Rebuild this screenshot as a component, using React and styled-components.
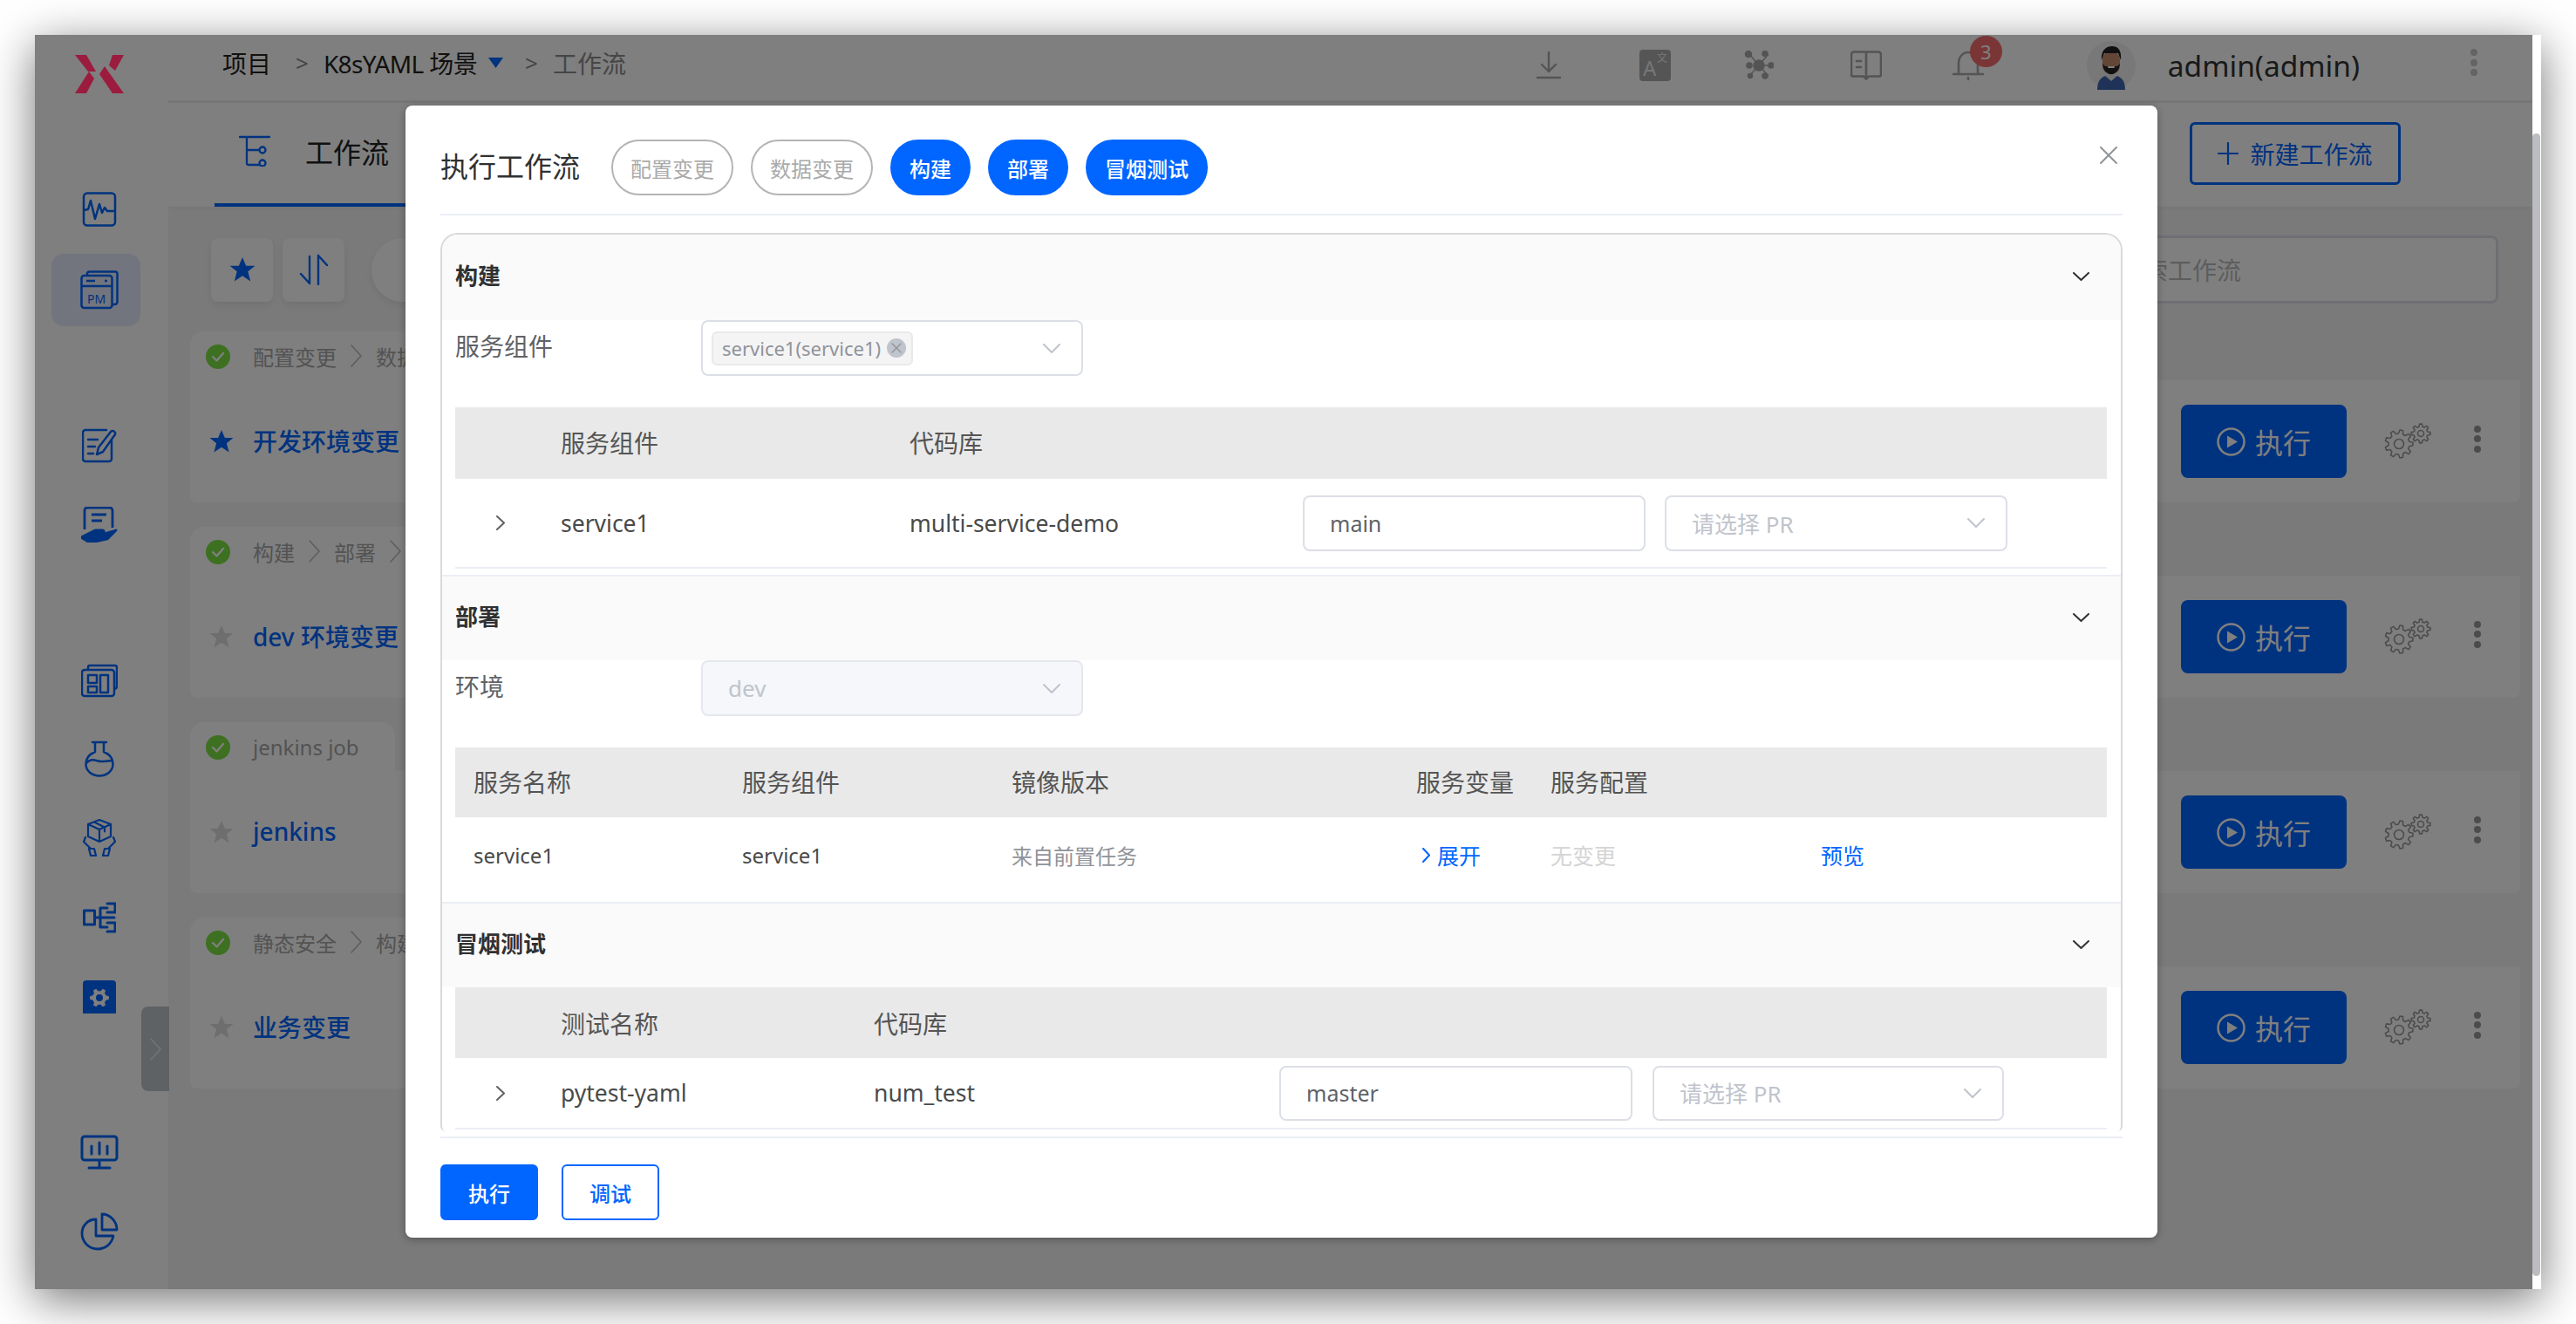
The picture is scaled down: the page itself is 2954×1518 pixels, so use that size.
import React from 'react';
import styled, { createGlobalStyle } from 'styled-components';

const BLUE = '#0066ff';
const FONT = '"Noto Sans", "Noto Sans CJK SC", sans-serif';

const GlobalStyle = createGlobalStyle`
  html, body { margin: 0; padding: 0; background: #fff; }
  body { font-family: ${FONT}; width: 2954px; height: 1518px; overflow: hidden; }
  * { box-sizing: border-box; }
`;

const Desktop = styled.div`
  width: 2954px;
  height: 1518px;
  padding: 40px;
`;

const Browser = styled.div`
  position: relative;
  display: flex;
  width: 2874px;
  height: 1438px;
  overflow: hidden;
  background: #f5f5f5;
  box-shadow: 0 12px 50px rgba(0, 0, 0, 0.55);
`;

const ScrollTrack = styled.div`
  width: 10px;
  flex: none;
  padding-top: 113px;
  background: #fff;
`;

const ScrollThumb = styled.div`
  width: 9px;
  height: 1310px;
  border-radius: 5px;
  background: #bcbdc0;
`;

/* sidebar */
const Sidebar = styled.aside`
  width: 153px;
  flex: none;
  display: flex;
  flex-direction: column;
  align-items: center;
  padding-right: 5px;
  background: #fff;
  position: relative;
`;

const LogoWrap = styled.div`
  display: flex;
  margin-top: 23px;
  position: relative;
  z-index: 3;
`;

const NavSlot = styled.div`
  display: flex;
  align-items: center;
  justify-content: center;
  width: 102px;
  height: ${(p) => p.$h}px;
  margin-top: ${(p) => p.$mt || 0}px;
  margin-left: ${(p) => (p.$active ? -8 : 0)}px;
  padding-left: ${(p) => (p.$active ? 8 : 0)}px;
  border-radius: 14px;
  background: ${(p) => (p.$active ? '#e4ebfa' : 'transparent')};
`;

const CollapseHandle = styled.div`
  position: absolute;
  left: 122px;
  top: 1114px;
  width: 32px;
  height: 97px;
  z-index: 1;
  display: flex;
  align-items: center;
  justify-content: center;
  border-radius: 8px 0 0 8px;
  background: #bfc4ca;
`;

/* top bar */
const Main = styled.main`
  flex: 1;
  min-width: 0;
  display: flex;
  flex-direction: column;
`;

const TopBar = styled.header`
  height: 78px;
  flex: none;
  display: flex;
  align-items: center;
  padding: 0 0 6px 62px;
  background: #fff;
  border-bottom: 3px solid #ececec;
  font-size: 28px;
`;

const Crumbs = styled.nav`
  display: flex;
  align-items: center;
  padding-bottom: 6px;
`;

const Crumb = styled.span`
  color: ${(p) => (p.$muted ? '#8c8c8c' : '#222')};
  letter-spacing: ${(p) => p.$ls || 0}px;
`;

const CrumbSep = styled.span`
  margin: 0 17px 0 ${(p) => p.$ml || 28}px;
  color: #888;
  font-size: 26px;
`;

const CrumbCaret = styled.svg`
  margin-left: 13px;
`;

const ToolIcons = styled.div`
  margin-left: auto;
  padding-right: 63px;
  display: flex;
  align-items: center;
`;

const ToolSlot = styled.div`
  position: relative;
  display: flex;
  align-items: center;
  margin-left: ${(p) => p.$ml}px;
`;

const Badge = styled.span`
  position: absolute;
  left: 20px;
  top: -16px;
  width: 37px;
  height: 36px;
  display: flex;
  align-items: center;
  justify-content: center;
  border-radius: 50%;
  background: #f56c6c;
  color: #fff;
  font-size: 22px;
`;

const UserName = styled.span`
  margin-left: 37px;
  font-size: 33.500px;
  color: #333;
  white-space: nowrap;
`;

const TabBar = styled.div`
  height: 119px;
  flex: none;
  display: flex;
  align-items: stretch;
  padding: 0 151px 0 53px;
  background: #fff;
  box-shadow: 0 2px 4px rgba(0, 0, 0, 0.04);
`;

const Tab = styled.div`
  display: flex;
  align-items: center;
  gap: 40px;
  width: 300px;
  padding: 0 0 6px 28px;
  border-bottom: 4px solid ${BLUE};
  font-size: 32px;
  color: #222;
`;

const NewButton = styled.button`
  margin: 22px 0 25px auto;
  width: 242px;
  display: flex;
  align-items: center;
  justify-content: center;
  gap: 13px;
  font: 28px ${FONT};
  color: ${BLUE};
  background: #fff;
  border: 3px solid ${BLUE};
  border-radius: 6px;
`;

const Toolbar = styled.div`
  display: flex;
  align-items: center;
  height: 78px;
  margin-top: 33px;
  padding: 0 39px 0 49px;
`;

const SquareButton = styled.div`
  width: 71px;
  height: 73px;
  margin-right: 11px;
  display: flex;
  align-items: center;
  justify-content: center;
  background: #fff;
  border-radius: 8px;
  box-shadow: 0 4px 10px rgba(0, 0, 0, 0.08);
`;

const PillFilter = styled.div`
  width: 320px;
  height: 73px;
  margin-left: 20px;
  border-radius: 36px;
  background: #fff;
  box-shadow: 0 4px 10px rgba(0, 0, 0, 0.08);
`;

const SearchBox = styled.div`
  margin-left: auto;
  width: 470px;
  height: 78px;
  padding-left: 32px;
  display: flex;
  align-items: center;
  font-size: 28px;
  color: #bbb;
  background: #fff;
  border: 3px solid #dcdfe6;
  border-radius: 8px;
`;

/* workflow cards */
const CardList = styled.div`
  display: flex;
  flex-direction: column;
  gap: 28px;
  margin: 32px 14px 0 25px;
`;

const CardTab = styled.div`
  display: inline-flex;
  align-items: center;
  height: 56px;
  padding: 0 41px 0 18px;
  border-radius: 16px 16px 0 0;
  background: #fff;
  font-size: 24px;
  color: #a6a6a6;
  vertical-align: top;
`;

const CheckDot = styled.span`
  width: 28px;
  height: 28px;
  margin: 2px 26px 0 0;
  flex: none;
  display: flex;
  align-items: center;
  justify-content: center;
  border-radius: 50%;
  background: #7ce043;
`;

const StageSep = styled.span`
  display: flex;
  margin: 0 16px;
`;

const CardBody = styled.div`
  height: 140px;
  display: flex;
  align-items: center;
  padding: 0 45px 0 22px;
  background: #fff;
  border-radius: 0 0 8px 8px;
`;

const CardName = styled.span`
  margin-left: 22px;
  padding-bottom: 3px;
  font-size: 28px;
  font-weight: 500;
  color: ${BLUE};
`;

const RunButton = styled.div`
  margin-left: auto;
  width: 190px;
  height: 84px;
  display: flex;
  align-items: center;
  justify-content: center;
  gap: 11px;
  border-radius: 8px;
  background: ${BLUE};
  color: #fff;
  font-size: 32px;
`;

const GearWrap = styled.div`
  display: flex;
  margin: 0 49px 0 43px;
`;

const Dots = styled.div`
  display: flex;
  flex-direction: column;
  gap: 3.500px;
  margin-top: -6px;
  span {
    width: 8px;
    height: 8px;
    border-radius: 50%;
    background: ${(p) => p.$c || '#999'};
  }
`;

/* modal */
const Overlay = styled.div`
  position: absolute;
  left: 0;
  top: 0;
  right: 10px;
  bottom: 0;
  z-index: 2;
  padding: 81px 0 0 425px;
  background: rgba(0, 0, 0, 0.5);
`;

const Modal = styled.div`
  width: 2009px;
  height: 1298px;
  padding: 0 40px;
  display: flex;
  flex-direction: column;
  background: #fff;
  border-radius: 8px;
  box-shadow: 0 2px 10px rgba(0, 0, 0, 0.3);
`;

const ModalHead = styled.div`
  position: relative;
  flex: none;
  height: 126px;
  display: flex;
  align-items: center;
  padding-top: 18px;
  border-bottom: 2px solid #ebeef5;
`;

const ModalTitle = styled.h2`
  margin: 0 36px 0 0;
  padding-bottom: 6px;
  font-size: 32px;
  font-weight: 400;
  color: #303133;
`;

const Pill = styled.span`
  height: 64px;
  margin-right: 20px;
  padding: 0 20px;
  display: flex;
  align-items: center;
  border-radius: 32px;
  font-size: 24px;
  border: 2px solid ${(p) => (p.$on ? BLUE : '#b4b4b4')};
  background: ${(p) => (p.$on ? BLUE : '#fff')};
  color: ${(p) => (p.$on ? '#fff' : '#aaa')};
  font-weight: ${(p) => (p.$on ? 500 : 400)};
`;

const CloseButton = styled.div`
  position: absolute;
  right: 6px;
  top: 47px;
  display: flex;
`;

const Panel = styled.div`
  flex: none;
  height: 1030px;
  margin-top: 20px;
  overflow: hidden;
  border: 2px solid #d9d9d9;
  border-bottom: 0;
  border-radius: 20px 20px 6px 6px;
`;

const Section = styled.section`
  border-top: ${(p) => (p.$first ? '0' : '2px solid #ebeef5')};
`;

const SectionHead = styled.div`
  height: ${(p) => (p.$first ? 98 : 96)}px;
  display: flex;
  align-items: center;
  justify-content: space-between;
  padding: 0 36px 2px 15px;
  background: #fafafa;
`;

const SectionTitle = styled.span`
  padding-bottom: 5px;
  font-size: 26px;
  font-weight: 700;
  color: #303133;
`;

const SectionBody = styled.div`
  padding: 0 16px 0 15px;
`;

const FieldRow = styled.div`
  display: flex;
  align-items: flex-start;
  height: 64px;
  margin-bottom: 36px;
`;

const FieldLabel = styled.label`
  width: 282px;
  flex: none;
  line-height: 60px;
  font-size: 28px;
  color: #606266;
`;

const SelectBox = styled.div`
  width: ${(p) => p.$w}px;
  height: ${(p) => p.$h || 64}px;
  flex: none;
  display: flex;
  align-items: center;
  justify-content: space-between;
  padding: 0 24px 0 ${(p) => p.$pl || 29}px;
  font-size: 26px;
  color: #c0c4cc;
  background: ${(p) => (p.$disabled ? '#f5f7fa' : '#fff')};
  border: 2px solid ${(p) => (p.$disabled ? '#e4e7ed' : '#dcdfe6')};
  border-radius: 8px;
`;

const TextInput = styled(SelectBox)`
  color: #606266;
  font-size: 25px;
`;

const Tag = styled.span`
  display: flex;
  align-items: center;
  gap: 7px;
  height: 39px;
  padding: 0 6px 0 10px;
  border-radius: 6px;
  font-size: 22px;
  color: #909399;
  background: #f4f4f5;
  border: 2px solid #e9e9eb;
`;

const TagClose = styled.span`
  width: 22px;
  height: 22px;
  display: flex;
  align-items: center;
  justify-content: center;
  border-radius: 50%;
  background: #c0c4cc;
`;

const TableHead = styled.div`
  display: grid;
  grid-template-columns: ${(p) => p.$cols};
  align-items: center;
  height: ${(p) => p.$h}px;
  padding-left: ${(p) => p.$pl || 0}px;
  padding-bottom: ${(p) => p.$pb || 0}px;
  background: #e9e9e9;
  font-size: 28px;
  color: #555;
`;

const TableRow = styled.div`
  display: grid;
  grid-template-columns: ${(p) => p.$cols};
  align-items: center;
  height: ${(p) => p.$h}px;
  padding-left: ${(p) => p.$pl || 0}px;
  padding-bottom: ${(p) => p.$pb || 0}px;
  font-size: ${(p) => p.$fs || 26.5}px;
  color: #4a4a4a;
  border-bottom: ${(p) => (p.$line ? '2px solid #ebeef5' : '0')};
  margin-bottom: ${(p) => p.$mb || 0}px;
`;

const ExpandCell = styled.span`
  display: flex;
  padding-left: 47px;
`;

const Muted = styled.span`
  color: ${(p) => p.$c};
  font-size: ${(p) => p.$fs || 24}px;
`;

const LinkCell = styled.span`
  display: flex;
  align-items: center;
  gap: 8px;
  margin-left: ${(p) => p.$ml || 0}px;
  color: ${BLUE};
  font-size: 25px;
`;

const Footer = styled.div`
  flex: none;
  margin-top: 6px;
  padding-top: 30px;
  display: flex;
  gap: 27px;
  border-top: 2px solid #ebeef5;
`;

const FootButton = styled.button`
  width: 112px;
  height: 64px;
  font: 500 24px ${FONT};
  border-radius: 6px;
  border: 2px solid ${BLUE};
  background: ${(p) => (p.$solid ? BLUE : '#fff')};
  color: ${(p) => (p.$solid ? '#fff' : BLUE)};
`;

/* icons */
const Line = ({ w, h, d, color = BLUE, sw = 2.5, vb }) => (
  <svg width={w} height={h} viewBox={vb || `0 0 ${w} ${h}`} fill="none" stroke={color} strokeWidth={sw} strokeLinecap="round" strokeLinejoin="round">
    <path d={d} />
  </svg>
);

const ChevronDown = ({ w = 19, h = 10, color = '#303133', sw = 2 }) => (
  <Line w={w} h={h} sw={sw} color={color} d={`M1 1L${w / 2} ${h - 1}L${w - 1} 1`} />
);

const ChevronRight = ({ w = 10, h = 17, color = '#606266', sw = 2 }) => (
  <Line w={w} h={h} sw={sw} color={color} d={`M1 1L${w - 1} ${h / 2}L1 ${h - 1}`} />
);

const StarIcon = ({ size = 28, color = BLUE }) => (
  <svg width={size} height={size} viewBox="0 0 28 28" fill={color}>
    <path d="M14 1l3.900 9h9.600l-7.600 6.200 2.700 10.300L14 20.800l-8.600 5.700 2.700-10.300L.5 10h9.600z" />
  </svg>
);

const gearPath = (cx, cy, ro, ri, teeth) => {
  const pts = [];
  const step = (Math.PI * 2) / teeth;
  for (let i = 0; i < teeth; i++) {
    const a = i * step;
    [[-0.32, ri], [-0.16, ro], [0.16, ro], [0.32, ri]].forEach(([k, r]) => {
      pts.push(`${(cx + Math.cos(a + k * step) * r).toFixed(2)} ${(cy + Math.sin(a + k * step) * r).toFixed(2)}`);
    });
  }
  return `M${pts.join('L')}Z`;
};

const GearsIcon = () => (
  <svg width="54" height="42" viewBox="0 0 54 42" fill="none" stroke="#999" strokeWidth="1.600" strokeLinejoin="round">
    <path d={gearPath(17, 24, 16, 12, 9)} />
    <circle cx="17" cy="24" r="5.500" />
    <path d={gearPath(42, 12, 11, 8, 8)} />
    <circle cx="42" cy="12" r="3.500" />
  </svg>
);

const PlayCircle = () => (
  <svg width="33" height="33" viewBox="0 0 33 33" fill="none">
    <circle cx="16.500" cy="16.500" r="15" stroke="#fff" strokeWidth="2.500" />
    <path d="M12 9.500l12 7-12 7z" fill="#fff" />
  </svg>
);

const CheckIcon = () => <Line w={16} h={14} sw={2.4} color="#fff" d="M2 7l4.500 4.500L14 3" />;

const XMark = ({ size = 20, color = '#909399', sw = 2 }) => (
  <Line w={size} h={size} sw={sw} color={color} d={`M1 1L${size - 1} ${size - 1}M${size - 1} 1L1 ${size - 1}`} />
);

const LogoX = () => (
  <svg width="56" height="44" viewBox="0 0 56 44" fill="#9b1c3e">
    <path d="M0 0h13l11 19h-9zM43 0h13L46 18l-7-6zM0 44l16-25 6 8-9 17zM28 22l6-9 22 31H43z" />
  </svg>
);

const ActivityIcon = () => (
  <Line w={40} h={40} d="M6 1.500h28a4 4 0 0 1 4 4v29a4 4 0 0 1-4 4H6a4 4 0 0 1-4-4v-29a4 4 0 0 1 4-4zM2 21l5-1 3-10 5 21 5-17 3 10 3-6 3 4h9" />
);

const PmIcon = () => (
  <svg width="44" height="45" viewBox="0 0 44 45" fill="none" stroke={BLUE} strokeWidth="2.500" strokeLinejoin="round">
    <path d="M8 6V4a2.500 2.500 0 0 1 2.500-2.500H40A2.500 2.500 0 0 1 42.500 4v32a3 3 0 0 1-3 3H37" />
    <rect x="1.500" y="6" width="35" height="37" rx="3" />
    <path d="M1.500 18h35M7 12h10M28 12h3" />
    <text x="8" y="38" fontSize="14" fill={BLUE} stroke="none" fontFamily={FONT}>PM</text>
  </svg>
);

const NoteIcon = () => (
  <Line w={40} h={40} d="M34 13v22a3 3 0 0 1-3 3H4a3 3 0 0 1-3-3V5a3 3 0 0 1 3-3h24M7 13h11M7 21h8M7 29h6M17 30l2-8L33 4a3 3 0 0 1 5 3L24 27z" />
);

const HandIcon = () => (
  <svg width="42" height="41" viewBox="0 0 42 41" fill="none" stroke={BLUE} strokeWidth="2.800" strokeLinejoin="round">
    <path d="M4 26V4a3 3 0 0 1 3-3h26a3 3 0 0 1 3 3v20M12 9h17M12 16h12" />
    <path d="M0 35l16-8h8c3 0 3 4 0 4h-6l8 0 14-4-10 10-14 3H8z" fill={BLUE} />
  </svg>
);

const BoardIcon = () => (
  <Line w={42} h={40} d="M4 8h31a3 3 0 0 1 3 3v24a3 3 0 0 1-3 3H4a3 3 0 0 1-3-3V11a3 3 0 0 1 3-3zM8 8V5a2 2 0 0 1 2-2h29a2 2 0 0 1 2 2v22a3 3 0 0 1-3 3M8 14h10v9H8zM8 27h10v7H8zM22 14h9v20h-9z" />
);

const FlaskIcon = () => (
  <Line w={34} h={42} d="M9 2h16M12 2v11C5 16 1.500 21 1.500 27c0 8 7 13.500 15.500 13.500S32.500 35 32.500 27c0-6-3.500-11-10.500-14V2M2 26c6-7 12-2 17-2s9-1 13-1" />
);

const BoxHandsIcon = () => (
  <Line w={38} h={46} sw={2.2} d="M19 2l13 5v14l-13 6-13-6V7zM6 7l13 6 13-6M19 13v14M13 4.500l12 6v5M3 22l-2 5 8 8M35 22l2 5-8 8M7 35h6l2 8H9zM31 35h-6l-2 8h6z" />
);

const FlowIcon = () => (
  <Line w={38} h={38} sw={3} d="M1.500 11h12v16h-12zM14 19h6M20 8v22M20 8h8M20 30h8M20 19h16M28 3h9v10h-9M28 25h9v10h-9" />
);

const GearBoxIcon = () => (
  <svg width="38" height="38" viewBox="0 0 38 38">
    <path d="M4 0h30a4 4 0 0 1 4 4v34H0V4a4 4 0 0 1 4-4z" fill={BLUE} />
    <path d={gearPath(19, 20, 11, 8, 6)} fill="#fff" />
    <circle cx="19" cy="20" r="4" fill={BLUE} />
  </svg>
);

const MonitorIcon = () => (
  <Line w={44} h={40} sw={3} d="M5 2h34a3 3 0 0 1 3 3v21a3 3 0 0 1-3 3H5a3 3 0 0 1-3-3V5a3 3 0 0 1 3-3zM22 29v8M10 38h24M13 13v9M22 9v13M31 13v9" />
);

const PieIcon = () => (
  <Line w={44} h={44} sw={2.8} d="M18 8C8 8 2 16 2 24c0 10 8 18 18 18 9 0 16-6 18-15H18zM25 2v18h17C42 10 34 2 25 2z" />
);

const FlowTabIcon = () => (
  <svg width="36" height="36" viewBox="0 0 36 36" fill="none" stroke={BLUE} strokeWidth="2.300" strokeLinecap="round">
    <path d="M1 2h34M9 2v30a2 2 0 0 0 2 2h12M9 17h14" />
    <circle cx="27" cy="17" r="3.500" />
    <circle cx="27" cy="32" r="3.500" />
  </svg>
);

const SortIcon = () => (
  <Line w={34} h={36} d="M12 34V3M12 34L2 23M22 2v33M22 2l10 11" sw={2.4} color={BLUE} />
);

const PlusIcon = () => <Line w={24} h={26} sw={2.2} d="M12 1v24M1 13h22" />;

const DownloadIcon = () => (
  <Line w={32} h={32} color="#a8a8a8" sw={2.4} d="M16 1v22M8 15l8 8 8-8M3 30h26" />
);

const TranslateIcon = () => (
  <svg width="36" height="36" viewBox="0 0 36 36">
    <rect width="36" height="36" rx="4" fill="#aaa" />
    <text x="4" y="30" fontSize="24" fill="#eee" fontFamily={FONT}>A</text>
    <text x="20" y="14" fontSize="12" fill="#eee" fontFamily={FONT}>文</text>
  </svg>
);

const NetworkIcon = () => (
  <svg width="34" height="33" viewBox="0 0 34 33" fill="#a8a8a8" stroke="#a8a8a8" strokeWidth="1.500">
    <path d="M6 4l11 13M28 4L17 17M6 29l11-12M28 29L17 17M17 17h15" />
    <circle cx="17" cy="17" r="6" />
    <circle cx="5" cy="4" r="3.500" /><circle cx="24" cy="3.500" r="3" />
    <circle cx="31" cy="17" r="3" /><circle cx="6" cy="17" r="3" />
    <circle cx="7" cy="29" r="2.500" /><circle cx="24" cy="29" r="3" />
  </svg>
);

const BookIcon = () => (
  <Line w={36} h={34} color="#a8a8a8" sw={2.6} d="M4 1.500h28a3 3 0 0 1 3 3v23a2 2 0 0 1-2 2H21l-3 3-3-3H3a2 2 0 0 1-2-2v-23a3 3 0 0 1 3-3zM18 1.500v28M7 12h5M7 19h5" />
);

const BellIcon = () => (
  <Line w={36} h={36} color="#a8a8a8" sw={2.6} d="M7 28V16C7 8 12 3 18 3s11 5 11 13v12M1 28h34M18 32v2" />
);

const Avatar = () => (
  <svg width="56" height="56" viewBox="0 0 56 56">
    <circle cx="28" cy="28" r="28" fill="#f0f0f0" />
    <path d="M12 56c0-12 6-17 16-17s16 5 16 17z" fill="#3f66b0" />
    <path d="M20 39l8 7 8-7z" fill="#e8e8e8" />
    <rect x="18" y="12" width="20" height="26" rx="9" fill="#c98d6e" />
    <path d="M17 22c-1-10 4-16 12-16s11 6 10 16l-3-8H20z" fill="#222" />
    <path d="M18 26c1 6 2 8 5 10 3 3 7 3 10 0 3-2 4-4 5-10l-3 3H21z" fill="#222" />
    <rect x="24" y="29" width="8" height="2" rx="1" fill="#fff" />
  </svg>
);

const stages = [
  ['配置变更', '数据变更', '构建', '部署'],
  ['构建', '部署', '冒烟测试'],
  ['jenkins job'],
  ['静态安全', '构建', '部署'],
];

const workflows = [
  { name: '开发环境变更', starred: true },
  { name: 'dev 环境变更' },
  { name: 'jenkins' },
  { name: '业务变更' },
];

const BUILD_COLS = '121px 400px 451px 393px 22px 393px';
const DEPLOY_COLS = '308px 309px 464px 154px 310px 1fr';
const TEST_COLS = '121px 359px 465px 405px 23px 403px';

function WorkflowCard({ wf, flow }) {
  return (
    <div>
      <CardTab>
        <CheckDot><CheckIcon /></CheckDot>
        {flow.map((s, i) => (
          <React.Fragment key={s}>
            {i > 0 && <StageSep><ChevronRight w={13} h={26} color="#bbb" sw={1.6} /></StageSep>}
            <span>{s}</span>
          </React.Fragment>
        ))}
      </CardTab>
      <CardBody>
        <StarIcon color={wf.starred ? BLUE : '#dcdcdc'} />
        <CardName>{wf.name}</CardName>
        <RunButton><PlayCircle />执行</RunButton>
        <GearWrap><GearsIcon /></GearWrap>
        <Dots><span /><span /><span /></Dots>
      </CardBody>
    </div>
  );
}

export default function App() {
  return (
    <Desktop>
      <GlobalStyle />
      <Browser>
        <Sidebar>
          <LogoWrap><LogoX /></LogoWrap>
          <NavSlot $h={40} $mt={113}><ActivityIcon /></NavSlot>
          <NavSlot $h={83} $mt={31} $active><PmIcon /></NavSlot>
          <NavSlot $h={40} $mt={117}><NoteIcon /></NavSlot>
          <NavSlot $h={40} $mt={50}><HandIcon /></NavSlot>
          <NavSlot $h={40} $mt={139}><BoardIcon /></NavSlot>
          <NavSlot $h={42} $mt={49}><FlaskIcon /></NavSlot>
          <NavSlot $h={46} $mt={47}><BoxHandsIcon /></NavSlot>
          <NavSlot $h={38} $mt={49}><FlowIcon /></NavSlot>
          <NavSlot $h={38} $mt={53}><GearBoxIcon /></NavSlot>
          <NavSlot $h={40} $mt={139}><MonitorIcon /></NavSlot>
          <NavSlot $h={44} $mt={49}><PieIcon /></NavSlot>
          <CollapseHandle><ChevronRight w={13} h={26} color="#e8e8e8" sw={1.5} /></CollapseHandle>
        </Sidebar>

        <Main>
          <TopBar>
            <Crumbs>
              <Crumb>项目</Crumb>
              <CrumbSep>&gt;</CrumbSep>
              <Crumb $ls={-0.6}>K8sYAML 场景</Crumb>
              <CrumbCaret width="17" height="12" viewBox="0 0 17 12" fill={BLUE}><path d="M0 0h17L8.500 12z" /></CrumbCaret>
              <CrumbSep $ml={25}>&gt;</CrumbSep>
              <Crumb $muted>工作流</Crumb>
            </Crumbs>
            <ToolIcons>
              <ToolSlot $ml={0}><DownloadIcon /></ToolSlot>
              <ToolSlot $ml={88}><TranslateIcon /></ToolSlot>
              <ToolSlot $ml={84}><NetworkIcon /></ToolSlot>
              <ToolSlot $ml={88}><BookIcon /></ToolSlot>
              <ToolSlot $ml={81}><BellIcon /><Badge>3</Badge></ToolSlot>
              <ToolSlot $ml={118}><Avatar /></ToolSlot>
              <UserName>admin(admin)</UserName>
              <ToolSlot $ml={127}>
                <Dots $c="#c8c8c8"><span /><span /><span /></Dots>
              </ToolSlot>
            </ToolIcons>
          </TopBar>

          <TabBar>
            <Tab><FlowTabIcon />工作流</Tab>
            <NewButton><PlusIcon />新建工作流</NewButton>
          </TabBar>

          <Toolbar>
            <SquareButton><StarIcon size={30} /></SquareButton>
            <SquareButton><SortIcon /></SquareButton>
            <PillFilter />
            <SearchBox>搜索工作流</SearchBox>
          </Toolbar>

          <CardList>
            {workflows.map((wf, i) => (
              <WorkflowCard key={wf.name} wf={wf} flow={stages[i]} />
            ))}
          </CardList>
        </Main>

        <ScrollTrack><ScrollThumb /></ScrollTrack>

        <Overlay>
          <Modal>
            <ModalHead>
              <ModalTitle>执行工作流</ModalTitle>
              <Pill>配置变更</Pill>
              <Pill>数据变更</Pill>
              <Pill $on>构建</Pill>
              <Pill $on>部署</Pill>
              <Pill $on>冒烟测试</Pill>
              <CloseButton><XMark /></CloseButton>
            </ModalHead>

            <Panel>
              <Section $first>
                <SectionHead $first><SectionTitle>构建</SectionTitle><ChevronDown /></SectionHead>
                <SectionBody>
                  <FieldRow>
                    <FieldLabel>服务组件</FieldLabel>
                    <SelectBox $w={438} $pl={10}>
                      <Tag>service1(service1)<TagClose><XMark size={12} color="#909399" sw={1.4} /></TagClose></Tag>
                      <ChevronDown w={20} h={11} color="#c0c4cc" />
                    </SelectBox>
                  </FieldRow>
                  <TableHead $h={82} $pb={2} $cols={BUILD_COLS}>
                    <span />
                    <span>服务组件</span>
                    <span>代码库</span>
                  </TableHead>
                  <TableRow $h={103} $cols={BUILD_COLS} $line $mb={7}>
                    <ExpandCell><ChevronRight /></ExpandCell>
                    <span>service1</span>
                    <span>multi-service-demo</span>
                    <TextInput $w={393}>main</TextInput>
                    <span />
                    <SelectBox $w={393}>请选择 PR<ChevronDown w={20} h={11} color="#c0c4cc" /></SelectBox>
                  </TableRow>
                </SectionBody>
              </Section>

              <Section>
                <SectionHead><SectionTitle>部署</SectionTitle><ChevronDown /></SectionHead>
                <SectionBody>
                  <FieldRow>
                    <FieldLabel>环境</FieldLabel>
                    <SelectBox $w={438} $disabled>dev<ChevronDown w={20} h={11} color="#c0c4cc" /></SelectBox>
                  </FieldRow>
                  <TableHead $h={80} $pl={21} $pb={2} $cols={DEPLOY_COLS}>
                    <span>服务名称</span>
                    <span>服务组件</span>
                    <span>镜像版本</span>
                    <span>服务变量</span>
                    <span>服务配置</span>
                  </TableHead>
                  <TableRow $h={97} $pl={21} $pb={11} $fs={24} $cols={DEPLOY_COLS}>
                    <span>service1</span>
                    <span>service1</span>
                    <Muted $c="#909399">来自前置任务</Muted>
                    <LinkCell $ml={7}><ChevronRight w={9} h={17} color={BLUE} />展开</LinkCell>
                    <Muted $c="#d4d4d4" $fs={25}>无变更</Muted>
                    <LinkCell>预览</LinkCell>
                  </TableRow>
                </SectionBody>
              </Section>

              <Section>
                <SectionHead><SectionTitle>冒烟测试</SectionTitle><ChevronDown /></SectionHead>
                <SectionBody>
                  <TableHead $h={81} $cols={TEST_COLS}>
                    <span />
                    <span>测试名称</span>
                    <span>代码库</span>
                  </TableHead>
                  <TableRow $h={82} $cols={TEST_COLS} $line>
                    <ExpandCell><ChevronRight /></ExpandCell>
                    <span>pytest-yaml</span>
                    <span>num_test</span>
                    <TextInput $w={405} $h={63}>master</TextInput>
                    <span />
                    <SelectBox $w={403} $h={63}>请选择 PR<ChevronDown w={20} h={11} color="#c0c4cc" /></SelectBox>
                  </TableRow>
                </SectionBody>
              </Section>
            </Panel>

            <Footer>
              <FootButton $solid>执行</FootButton>
              <FootButton>调试</FootButton>
            </Footer>
          </Modal>
        </Overlay>
      </Browser>
    </Desktop>
  );
}
